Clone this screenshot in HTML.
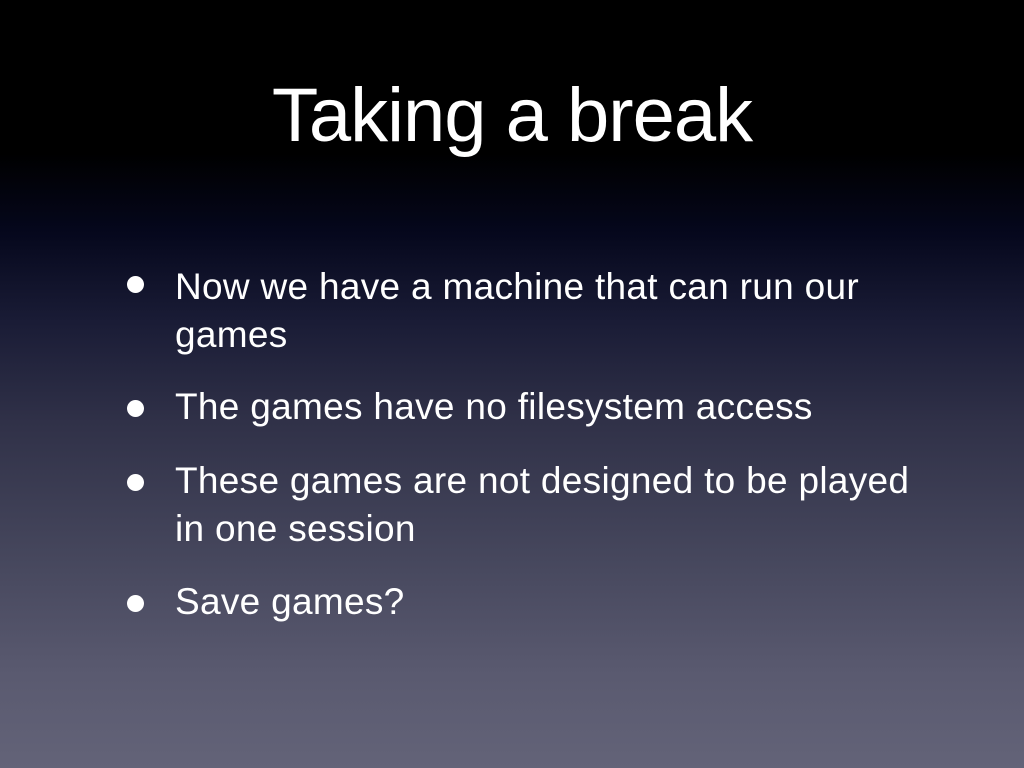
<!DOCTYPE html>
<html><head><meta charset="utf-8"><style>
html,body{margin:0;padding:0}
body{width:1024px;height:768px;overflow:hidden;position:relative;
background:linear-gradient(180deg,#000 0%,#000 20%,#05071c 30%,#1a1c36 42%,#303148 55%,#45465c 72%,#5a5a70 88%,#636378 100%);
font-family:"Liberation Sans",sans-serif;color:#fff}
.t{position:absolute;left:0;width:1024px;text-align:center;top:68px;font-size:76px;line-height:96px;letter-spacing:-1px}
.l{position:absolute;left:175px;font-size:37px;line-height:48px;white-space:nowrap;letter-spacing:0.3px}
.b{position:absolute;left:127px;width:17px;height:17px;border-radius:50%;background:#fff}
</style></head><body>
<div class="t">Taking a break</div>
<div class="b" style="top:276px"></div>
<div class="l" style="top:263px">Now we have a machine that can run our</div>
<div class="l" style="top:311px">games</div>
<div class="b" style="top:400px"></div>
<div class="l" style="top:383px">The games have no filesystem access</div>
<div class="b" style="top:474px"></div>
<div class="l" style="top:457px">These games are not designed to be played</div>
<div class="l" style="top:505px">in one session</div>
<div class="b" style="top:595px"></div>
<div class="l" style="top:578px">Save games?</div>
</body></html>
